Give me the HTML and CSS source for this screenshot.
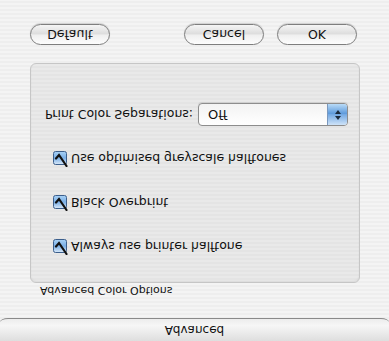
FILE: index.html
```html
<!DOCTYPE html>
<html lang="en">
<head>
    <meta charset="UTF-8">
    <title>Advanced</title>
    <link rel="stylesheet" href="styles.css">
</head>
<body>
    <div class="dialog">
        <div class="tabbar">Advanced</div>

        <div class="group-title">Advanced Color Options</div>
        <div class="group">
            <label class="check-row">
                <svg class="check" width="16" height="16" viewBox="0 0 16 16">
                    <defs>
                        <linearGradient id="cb" x1="0" y1="0" x2="0" y2="1">
                            <stop offset="0" stop-color="#dbeaf9"/>
                            <stop offset="0.5" stop-color="#79aee6"/>
                            <stop offset="1" stop-color="#a9d2f6"/>
                        </linearGradient>
                    </defs>
                    <rect x="0.5" y="2.5" width="13" height="13" rx="2" fill="url(#cb)" stroke="#3c5f8c"/>
                    <path d="M3 8.5 L6 12 L13.5 1" fill="none" stroke="#111" stroke-width="2.2" stroke-linecap="round"/>
                </svg>
                Always use printer halftone
            </label>
            <label class="check-row">
                <svg class="check" width="16" height="16" viewBox="0 0 16 16">
                    <rect x="0.5" y="2.5" width="13" height="13" rx="2" fill="url(#cb)" stroke="#3c5f8c"/>
                    <path d="M3 8.5 L6 12 L13.5 1" fill="none" stroke="#111" stroke-width="2.2" stroke-linecap="round"/>
                </svg>
                Black Overprint
            </label>
            <label class="check-row">
                <svg class="check" width="16" height="16" viewBox="0 0 16 16">
                    <rect x="0.5" y="2.5" width="13" height="13" rx="2" fill="url(#cb)" stroke="#3c5f8c"/>
                    <path d="M3 8.5 L6 12 L13.5 1" fill="none" stroke="#111" stroke-width="2.2" stroke-linecap="round"/>
                </svg>
                Use optimised greyscale halftones
            </label>
            <div class="popup-row">
                <span class="popup-label">Print Color Separations:</span>
                <div class="popup">
                    <span class="popup-value">Off</span>
                    <span class="popup-arrows">
                        <svg width="8" height="12" viewBox="0 0 8 12">
                            <path d="M1 5 L4 1 L7 5 Z M1 7 L4 11 L7 7 Z" fill="#1b2a3c"/>
                        </svg>
                    </span>
                </div>
            </div>
        </div>

        <div class="buttons">
            <button class="btn">Default</button>
            <span class="spacer"></span>
            <button class="btn">Cancel</button>
            <button class="btn">OK</button>
        </div>
    </div>
</body>
</html>
```

FILE: styles.css
```css
html, body {
    margin: 0;
    padding: 0;
}
body {
    width: 389px;
    height: 341px;
    overflow: hidden;
    font-family: "DejaVu Sans", "Liberation Sans", sans-serif;
    font-size: 12.5px;
    color: #111;
}
/* the reference is shown upside down, so the whole sheet is flipped */
.dialog {
    width: 389px;
    height: 341px;
    transform: scaleY(-1);
    background: repeating-linear-gradient(#f4f4f4 0, #f4f4f4 2px, #eeeeee 2px, #eeeeee 4px);
    display: flex;
    flex-direction: column;
}
.tabbar {
    height: 22px;
    line-height: 22px;
    text-align: center;
    border-bottom: 1px solid #8a8a8a;
    border-radius: 0 0 8px 8px / 0 0 4px 4px;
    background: linear-gradient(#dedede, #f6f6f6 70%, #ececec);
    font-size: 12px;
}
.group-title {
    margin: 21px 0 0 40px;
    font-size: 11px;
    line-height: 14px;
}
.group {
    box-sizing: border-box;
    margin: 0 29px 0 30px;
    height: 220px;
    border: 1px solid #c6c6c6;
    border-radius: 6px;
    background: repeating-linear-gradient(#e9e9e9 0, #e9e9e9 2px, #e4e4e4 2px, #e4e4e4 4px);
    box-shadow: inset 0 1px 2px rgba(0, 0, 0, 0.06);
    padding: 24px 0 0 0;
    display: flex;
    flex-direction: column;
    gap: 22px;
}
.check-row {
    height: 22px;
    display: flex;
    align-items: center;
    gap: 2px;
    padding-left: 22px;
}
.check {
    flex: none;
}
.popup-row {
    height: 22px;
    display: flex;
    align-items: center;
    padding-left: 14px;
    gap: 4px;
}
.popup-label {
    width: 149px;
}
.popup {
    width: 148px;
    height: 21px;
    border: 1px solid #8d8d8d;
    border-radius: 4px;
    background: linear-gradient(#ffffff, #f3f3f3);
    display: flex;
    align-items: center;
    overflow: hidden;
    box-shadow: 0 1px 1px rgba(0, 0, 0, 0.1);
}
.popup-value {
    flex: 1;
    padding-left: 9px;
    font-size: 13px;
}
.popup-arrows {
    width: 19px;
    height: 21px;
    display: flex;
    align-items: center;
    justify-content: center;
    border-left: 1px solid #7a98be;
    background: linear-gradient(#cfe3f8, #74a9e3 50%, #5f9bdc 55%, #b9dbf7);
}
.buttons {
    display: flex;
    gap: 13px;
    margin: 18px 32px 0 30px;
}
.spacer {
    flex: 1;
}
.btn {
    width: 80px;
    height: 21px;
    padding: 0;
    border: 1px solid #7e7e7e;
    border-radius: 11px;
    background: linear-gradient(#fdfdfd, #f0f0f0 45%, #dedede 55%, #f5f5f5);
    box-shadow: 0 1px 1px rgba(0, 0, 0, 0.15);
    font-family: "DejaVu Sans", "Liberation Sans", sans-serif;
    font-size: 12.5px;
    color: #111;
}
```
